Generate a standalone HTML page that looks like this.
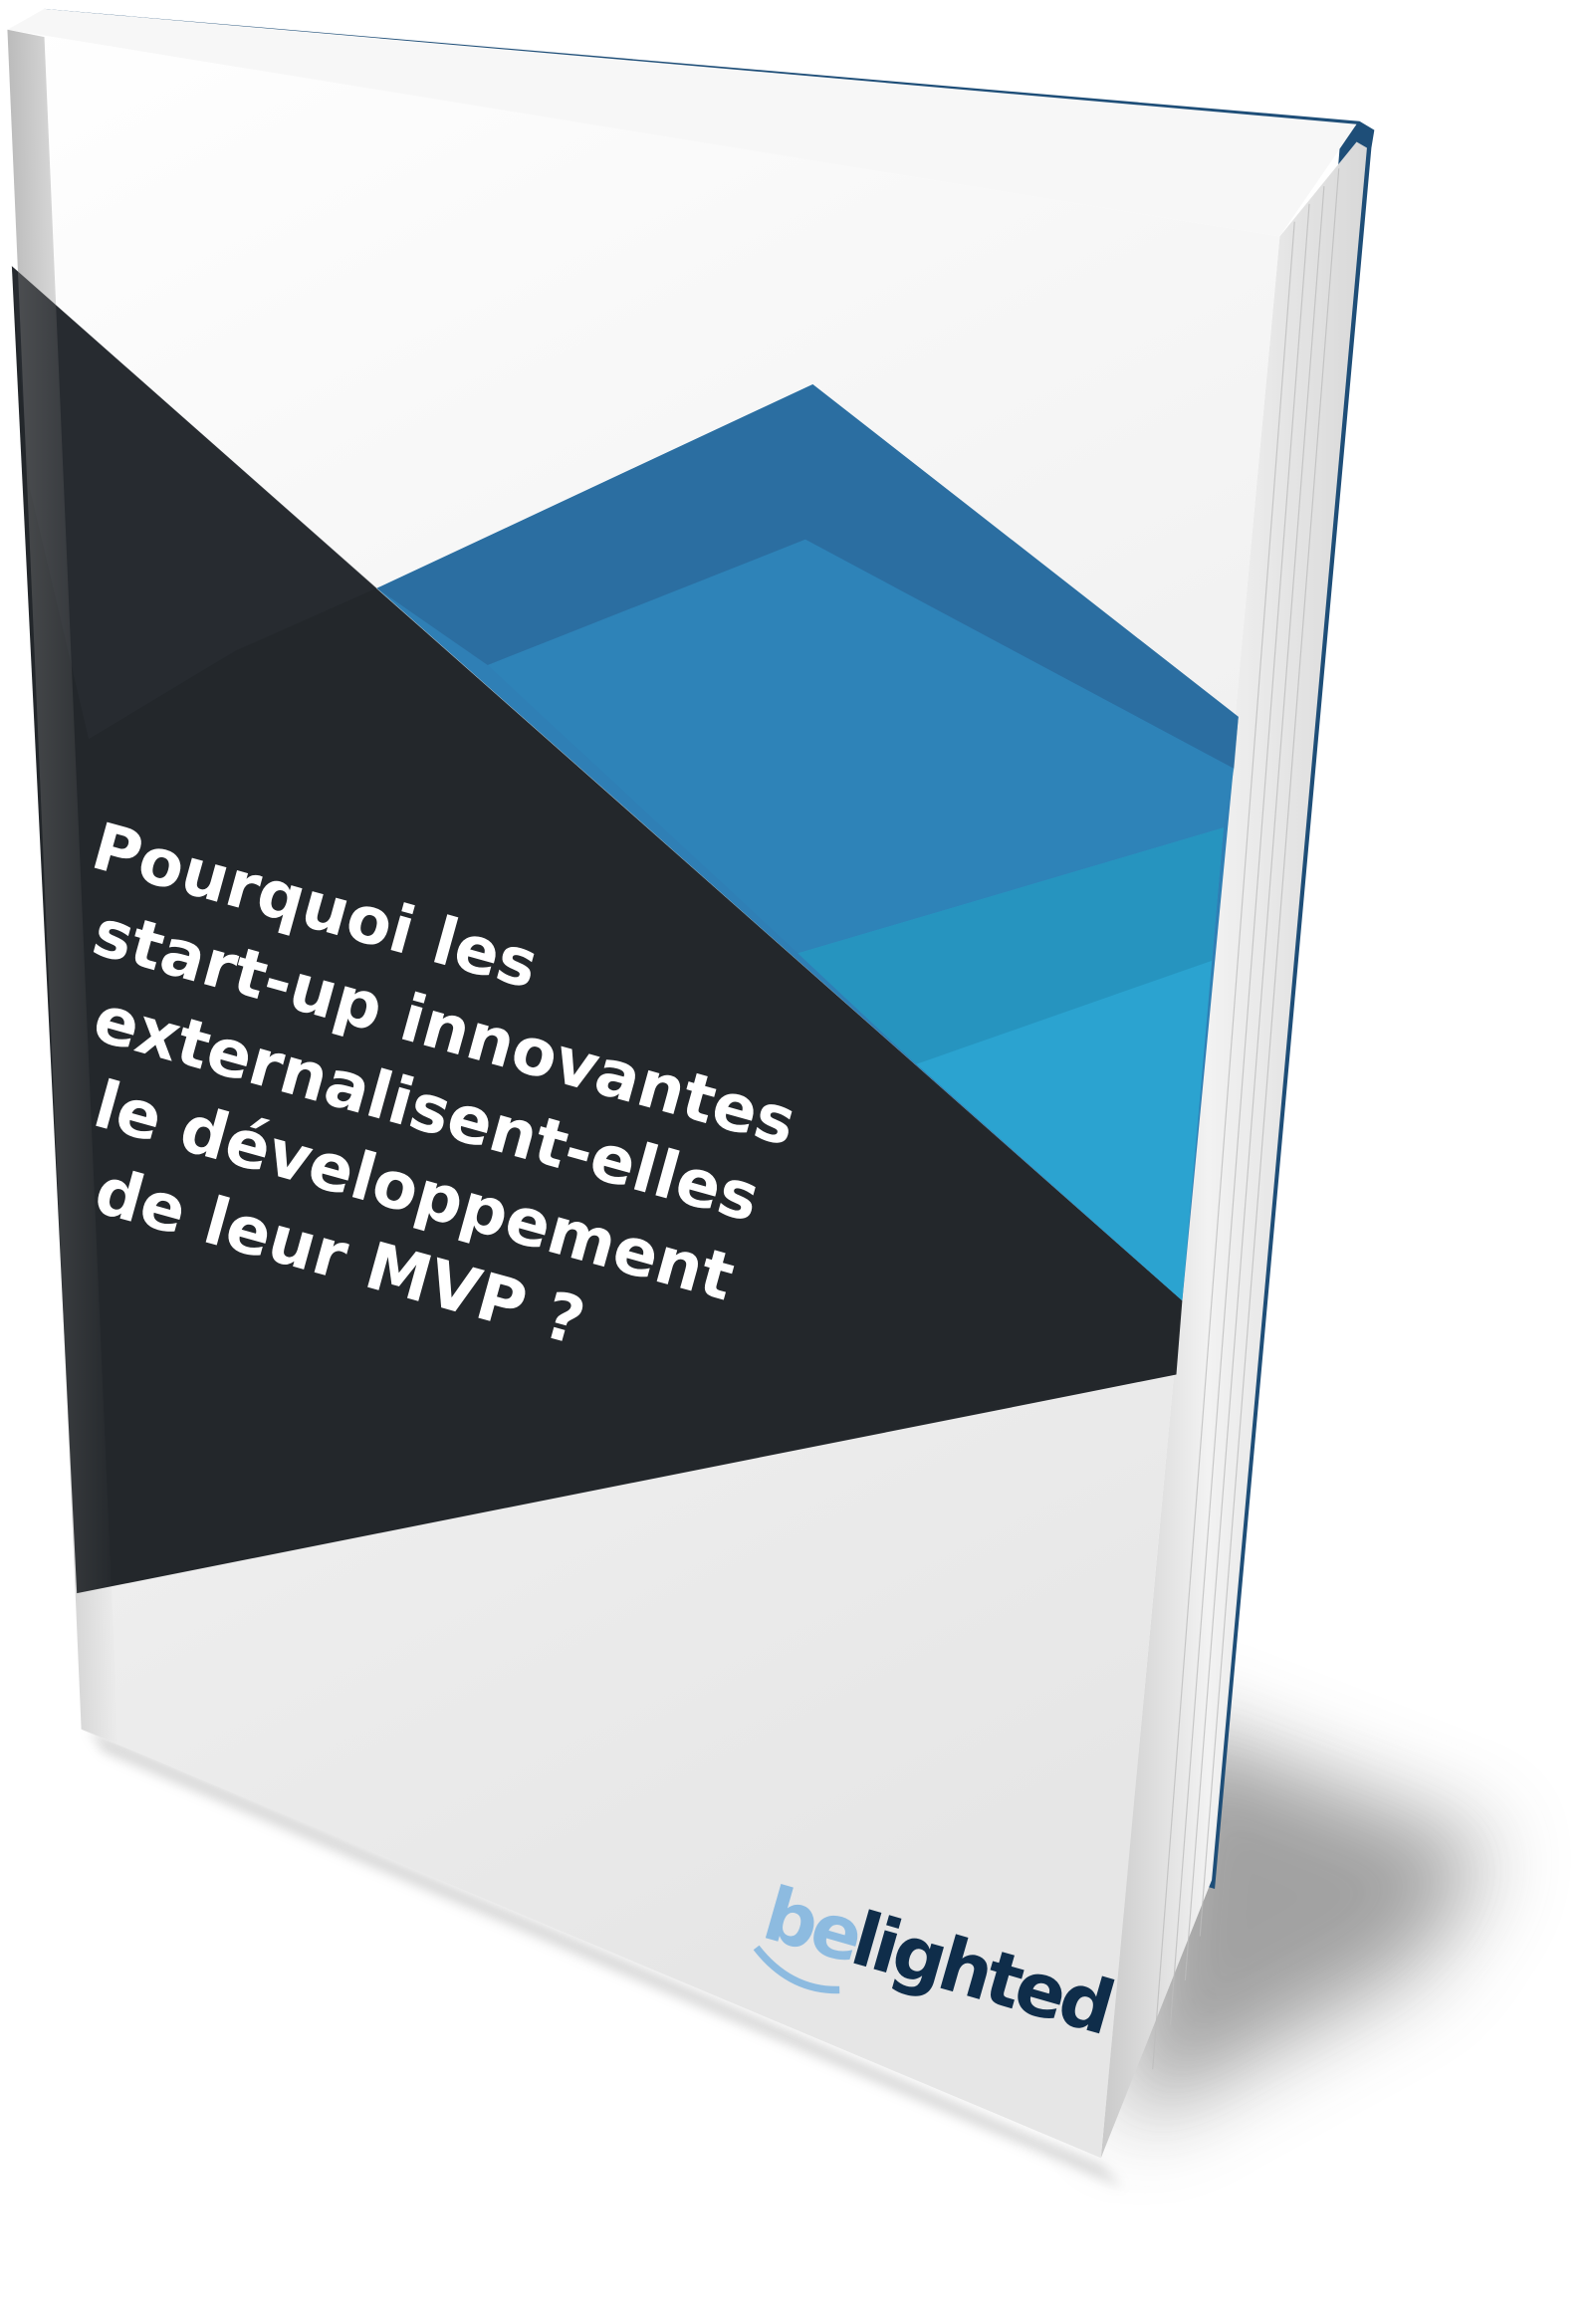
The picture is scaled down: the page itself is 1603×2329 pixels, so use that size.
<!DOCTYPE html>
<html><head><meta charset="utf-8"><style>
html,body{margin:0;padding:0;background:#fff;width:1603px;height:2329px;overflow:hidden}
svg{display:block}
</style></head><body>
<svg width="1603" height="2329" viewBox="0 0 1080 1569" preserveAspectRatio="none" xmlns="http://www.w3.org/2000/svg">
<defs>
<filter id="blur" x="-50%" y="-50%" width="200%" height="200%"><feGaussianBlur stdDeviation="30"/></filter>
<filter id="b2"><feGaussianBlur stdDeviation="4"/></filter>
<linearGradient id="pages" x1="0" y1="0" x2="1" y2="0">
<stop offset="0" stop-color="#c9c9c9"/><stop offset="0.4" stop-color="#f2f2f2"/><stop offset="1" stop-color="#d8d8d8"/>
</linearGradient>
<linearGradient id="lower" x1="0" y1="0" x2="0.3" y2="1">
<stop offset="0" stop-color="#ffffff"/><stop offset="1" stop-color="#e6e6e6"/>
</linearGradient>
<linearGradient id="leftshade" x1="0" y1="0" x2="1" y2="0">
<stop offset="0" stop-color="#777" stop-opacity="0.5"/><stop offset="1" stop-color="#777" stop-opacity="0"/>
</linearGradient>
</defs>
<path d="M780 1160 L1010 1250 L960 1330 L760 1440 Z" fill="#555" opacity="0.55" filter="url(#blur)"/>
<path d="M60 1170 L745 1465 L760 1480 L70 1185 Z" fill="#999" opacity="0.4" filter="url(#b2)"/>
<path d="M908 82 L930 88 L928 100 L822 1278 L812 1275 Z" fill="#1e4e78"/>
<path d="M866 160 L918 96 L925 100 L820 1272 L745 1460 Z" fill="url(#pages)"/>
<g stroke="#bdbdbd" stroke-width="0.8" opacity="0.8">
<path d="M876 150 L780 1400"/><path d="M886 138 L792 1370"/><path d="M896 126 L802 1340"/><path d="M906 114 L812 1310"/>
</g>
<path d="M30 6 L920 82 L930 88 L40 12 Z" fill="#1e4e78"/>
<path d="M5 20 L30 6 L918 84 L866 160 Z" fill="#f7f7f7"/>
<path d="M5 20 L866 160 L745 1460 L55 1170 Z" fill="url(#lower)"/>
<path d="M8 180 L800 880 L796 930 L52 1078 Z" fill="#23272b"/>
<path d="M8 180 L255 398 L160 440 L60 500 L20 330 Z" fill="#2a2e33" opacity="0.6"/>
<path d="M550 260 L838 485 L800 880 L255 398 Z" fill="#2f7fb5"/>
<path d="M550 260 L838 485 L835 520 L545 365 L330 450 L255 398 Z" fill="#2a6a9c" opacity="0.8"/>
<path d="M545 365 L835 520 L828 560 L540 645 L330 450 Z" fill="#2f86bb" opacity="0.6"/>
<path d="M828 560 L800 880 L620 720 L540 645 Z" fill="#2ba3d0"/>
<path d="M828 560 L820 650 L620 720 L540 645 Z" fill="#2694bf"/>
<path d="M5 20 L30 25 L80 1180 L55 1170 Z" fill="url(#leftshade)"/>
<g font-family="DejaVu Sans, sans-serif" font-weight="bold" font-size="44" fill="#fff" transform="translate(60,586) rotate(15.5)">
<text x="0" y="0">Pourquoi les</text>
<text x="16" y="56">start-up innovantes</text>
<text x="32" y="112">externalisent-elles</text>
<text x="48" y="168">le développement</text>
<text x="64" y="224">de leur MVP ?</text>
</g>
<g font-family="DejaVu Sans, sans-serif" font-weight="bold" font-size="50" transform="translate(514,1310) rotate(16)">
<text x="0" y="0" fill="#8dbbe0" letter-spacing="-3">be</text>
<text x="62" y="0" fill="#0f2d4a" letter-spacing="-3">lighted</text>
<path d="M0 8 Q30 30 62 20" stroke="#8dbbe0" stroke-width="5" fill="none"/>
</g>
</svg>
</body></html>
